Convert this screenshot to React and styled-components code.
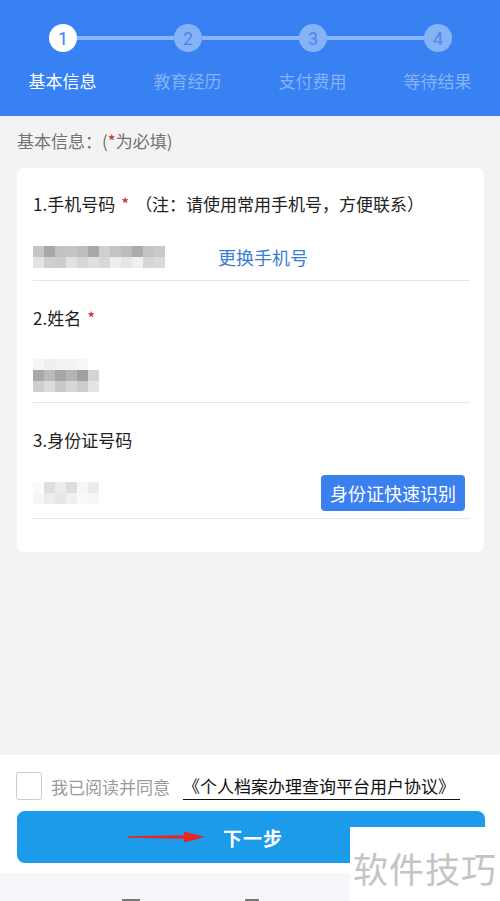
import React from 'react';
import styled, { createGlobalStyle } from 'styled-components';

const GlobalStyle = createGlobalStyle`
    html, body {
        margin: 0;
        padding: 0;
        background: #f3f3f3;
    }
    body {
        font-family: "Noto Sans CJK SC", "Noto Sans", sans-serif;
    }
`;

const Page = styled.div`
    width: 500px;
    height: 901px;
    display: flex;
    flex-direction: column;
    overflow: hidden;
    position: relative;
    background: #f3f3f3;
`;

const Header = styled.div`
    height: 116px;
    background: #3781f3;
    box-sizing: border-box;
    padding-top: 24px;
`;

const StepTrack = styled.div`
    display: flex;
    align-items: center;
    padding: 0 48px 0 49px;
`;

const StepDot = styled.div`
    width: 28px;
    height: 28px;
    border-radius: 50%;
    flex-shrink: 0;
    display: flex;
    align-items: center;
    justify-content: center;
    font-family: "Roboto", "Noto Sans", sans-serif;
    font-size: 18px;
    background: ${props => props.active ? '#ffffff' : '#86b2f7'};
    color: ${props => props.active ? '#3781f3' : '#4f87e6'};
`;

const Connector = styled.div`
    flex: 1;
    height: 4px;
    background: #8ab5f8;
`;

const StepLabels = styled.div`
    display: grid;
    grid-template-columns: repeat(4, 125px);
    margin-top: 17px;
`;

const StepLabel = styled.div`
    text-align: center;
    font-size: 17px;
    line-height: 24px;
    color: ${props => props.active ? '#ffffff' : '#86b2f7'};
`;

const Main = styled.div`
    flex: 1;
    padding: 14px 16px 0 17px;
`;

const SectionTitle = styled.div`
    font-size: 17px;
    line-height: 22px;
    color: #727272;
`;

const Required = styled.span`
    color: #d42a2a;
    margin: 0 ${props => props.gap || 0}px;
`;

const Card = styled.div`
    margin-top: 16px;
    background: #ffffff;
    border-radius: 7px;
    padding: 0 14px 33px 16px;
`;

const Field = styled.div`
    padding-top: ${props => props.top}px;
`;

const FieldLabel = styled.div`
    font-size: 17px;
    line-height: 24px;
    color: #222222;
`;

const ValueRow = styled.div`
    display: flex;
    align-items: center;
    height: ${props => props.height}px;
    margin-top: ${props => props.top}px;
    border-bottom: 1px solid #e6e6e6;
`;

const Mosaic = styled.div`
    display: grid;
    grid-template-columns: repeat(${props => props.cols}, 11px);
    grid-auto-rows: 11px;
`;

const Cell = styled.div`
    background: ${props => props.shade};
`;

const LinkText = styled.span`
    margin-left: 53px;
    font-size: 18px;
    color: #3b7dd2;
`;

const ScanButton = styled.button`
    margin-left: auto;
    margin-right: 5px;
    height: 36px;
    padding: 0 9px;
    border: none;
    border-radius: 4px;
    background: #3a80ee;
    color: #ffffff;
    font-family: inherit;
    font-size: 18px;
`;

const Footer = styled.div`
    height: 118px;
    box-sizing: border-box;
    background: #ffffff;
    padding: 17px 15px 0 17px;
`;

const AgreeRow = styled.div`
    display: flex;
    align-items: center;
    height: 28px;
`;

const CheckBox = styled.div`
    width: 24px;
    height: 26px;
    margin-left: -1px;
    border: 1.5px solid #cccccc;
    border-radius: 3px;
`;

const AgreeText = styled.span`
    margin-left: 9px;
    font-size: 17px;
    color: #9a9a9a;
`;

const AgreementLink = styled.span`
    margin-left: 13px;
    font-size: 17px;
    line-height: 26px;
    color: #111111;
    border-bottom: 1.5px solid #111111;
    padding-right: 5px;
`;

const NextButton = styled.div`
    margin-top: 11px;
    height: 52px;
    border-radius: 8px;
    background: #1b9be9;
    display: flex;
    align-items: center;
    justify-content: center;
    gap: 17px;
    padding-right: 91px;
`;

const NextText = styled.span`
    color: #ffffff;
    font-size: 19px;
    font-weight: bold;
    letter-spacing: 1px;
`;

const TabStrip = styled.div`
    height: 28px;
    background: #f6f7fa;
    display: flex;
    align-items: flex-end;
    padding-left: 122px;
    gap: 105px;
`;

const TabMark = styled.div`
    width: ${props => props.w}px;
    height: 2px;
    background: #777777;
`;

const Watermark = styled.div`
    position: absolute;
    right: 0;
    bottom: 0;
    width: 150px;
    height: 74px;
    background: #ffffff;
    display: flex;
    align-items: center;
    justify-content: center;
    padding-top: 6px;
    box-sizing: border-box;
    font-size: 35px;
    color: #c4c4c4;
    letter-spacing: 1px;
`;

const steps = ['基本信息', '教育经历', '支付费用', '等待结果'];

const phoneShades = [
    ['#c6c6c6', '#a8a8a8', '#c2c2c2', '#c4c4c4', '#bdbdbd', '#a9a9a9', '#cfcfcf', '#c3c3c3', '#bdbdbd', '#ababab', '#c4c4c4', '#c9c9c9'],
    ['#e3e3e3', '#cfcfcf', '#cccccc', '#e2e2e2', '#d6d6d6', '#e0e0e0', '#d8d8d8', '#eeeeee', '#e6e6e6', '#f0f0f0', '#d6d6d6', '#dadada'],
];

const nameShades = [
    ['#f6f6f6', '#efefef', '#f3f3f3', '#f3f3f3', '#f7f7f7', '#ffffff'],
    ['#a8a8a8', '#bababa', '#a6a6a6', '#b4b4b4', '#a0a0a0', '#d4d4d4'],
    ['#cfcfcf', '#dcdcdc', '#c8c8c8', '#d6d6d6', '#cccccc', '#e4e4e4'],
];

const idShades = [
    ['#fafafa', '#dedede', '#ececec', '#dddddd', '#f6f6f6', '#ebebeb'],
    ['#f7f7f7', '#ececec', '#e7e7e7', '#f0f0f0', '#fafafa', '#f7f7f7'],
];

const Blur = ({ shades }) => (
    <Mosaic cols={shades[0].length}>
        {shades.flat().map((shade, i) => <Cell key={i} shade={shade} />)}
    </Mosaic>
);

const Arrow = () => (
    <svg width="78" height="12" viewBox="0 0 78 12">
        <path d="M0 5.2 L56 4.2 L56 0.5 L77 6 L56 11.5 L56 7.8 L0 6.8 Z" fill="#e8261f" />
    </svg>
);

export default function App() {
    return (
        <Page>
            <GlobalStyle />
            <Header>
                <StepTrack>
                    {steps.map((s, i) => (
                        <React.Fragment key={s}>
                            {i > 0 && <Connector />}
                            <StepDot active={i === 0}>{i + 1}</StepDot>
                        </React.Fragment>
                    ))}
                </StepTrack>
                <StepLabels>
                    {steps.map((s, i) => (
                        <StepLabel key={s} active={i === 0}>{s}</StepLabel>
                    ))}
                </StepLabels>
            </Header>

            <Main>
                <SectionTitle>
                    基本信息：(<Required>*</Required>为必填)
                </SectionTitle>
                <Card>
                    <Field top={24}>
                        <FieldLabel>
                            1.手机号码<Required gap={6}>*</Required>（注：请使用常用手机号，方便联系）
                        </FieldLabel>
                        <ValueRow height={46} top={18}>
                            <Blur shades={phoneShades} />
                            <LinkText>更换手机号</LinkText>
                        </ValueRow>
                    </Field>
                    <Field top={25}>
                        <FieldLabel>
                            2.姓名<Required gap={6}>*</Required>
                        </FieldLabel>
                        <ValueRow height={54} top={18}>
                            <Blur shades={nameShades} />
                        </ValueRow>
                    </Field>
                    <Field top={25}>
                        <FieldLabel>3.身份证号码</FieldLabel>
                        <ValueRow height={50} top={16}>
                            <Blur shades={idShades} />
                            <ScanButton>身份证快速识别</ScanButton>
                        </ValueRow>
                    </Field>
                </Card>
            </Main>

            <Footer>
                <AgreeRow>
                    <CheckBox />
                    <AgreeText>我已阅读并同意</AgreeText>
                    <AgreementLink>《个人档案办理查询平台用户协议》</AgreementLink>
                </AgreeRow>
                <NextButton>
                    <Arrow />
                    <NextText>下一步</NextText>
                </NextButton>
            </Footer>
            <TabStrip>
                <TabMark w={18} />
                <TabMark w={14} />
            </TabStrip>

            <Watermark>软件技巧</Watermark>
        </Page>
    );
}
